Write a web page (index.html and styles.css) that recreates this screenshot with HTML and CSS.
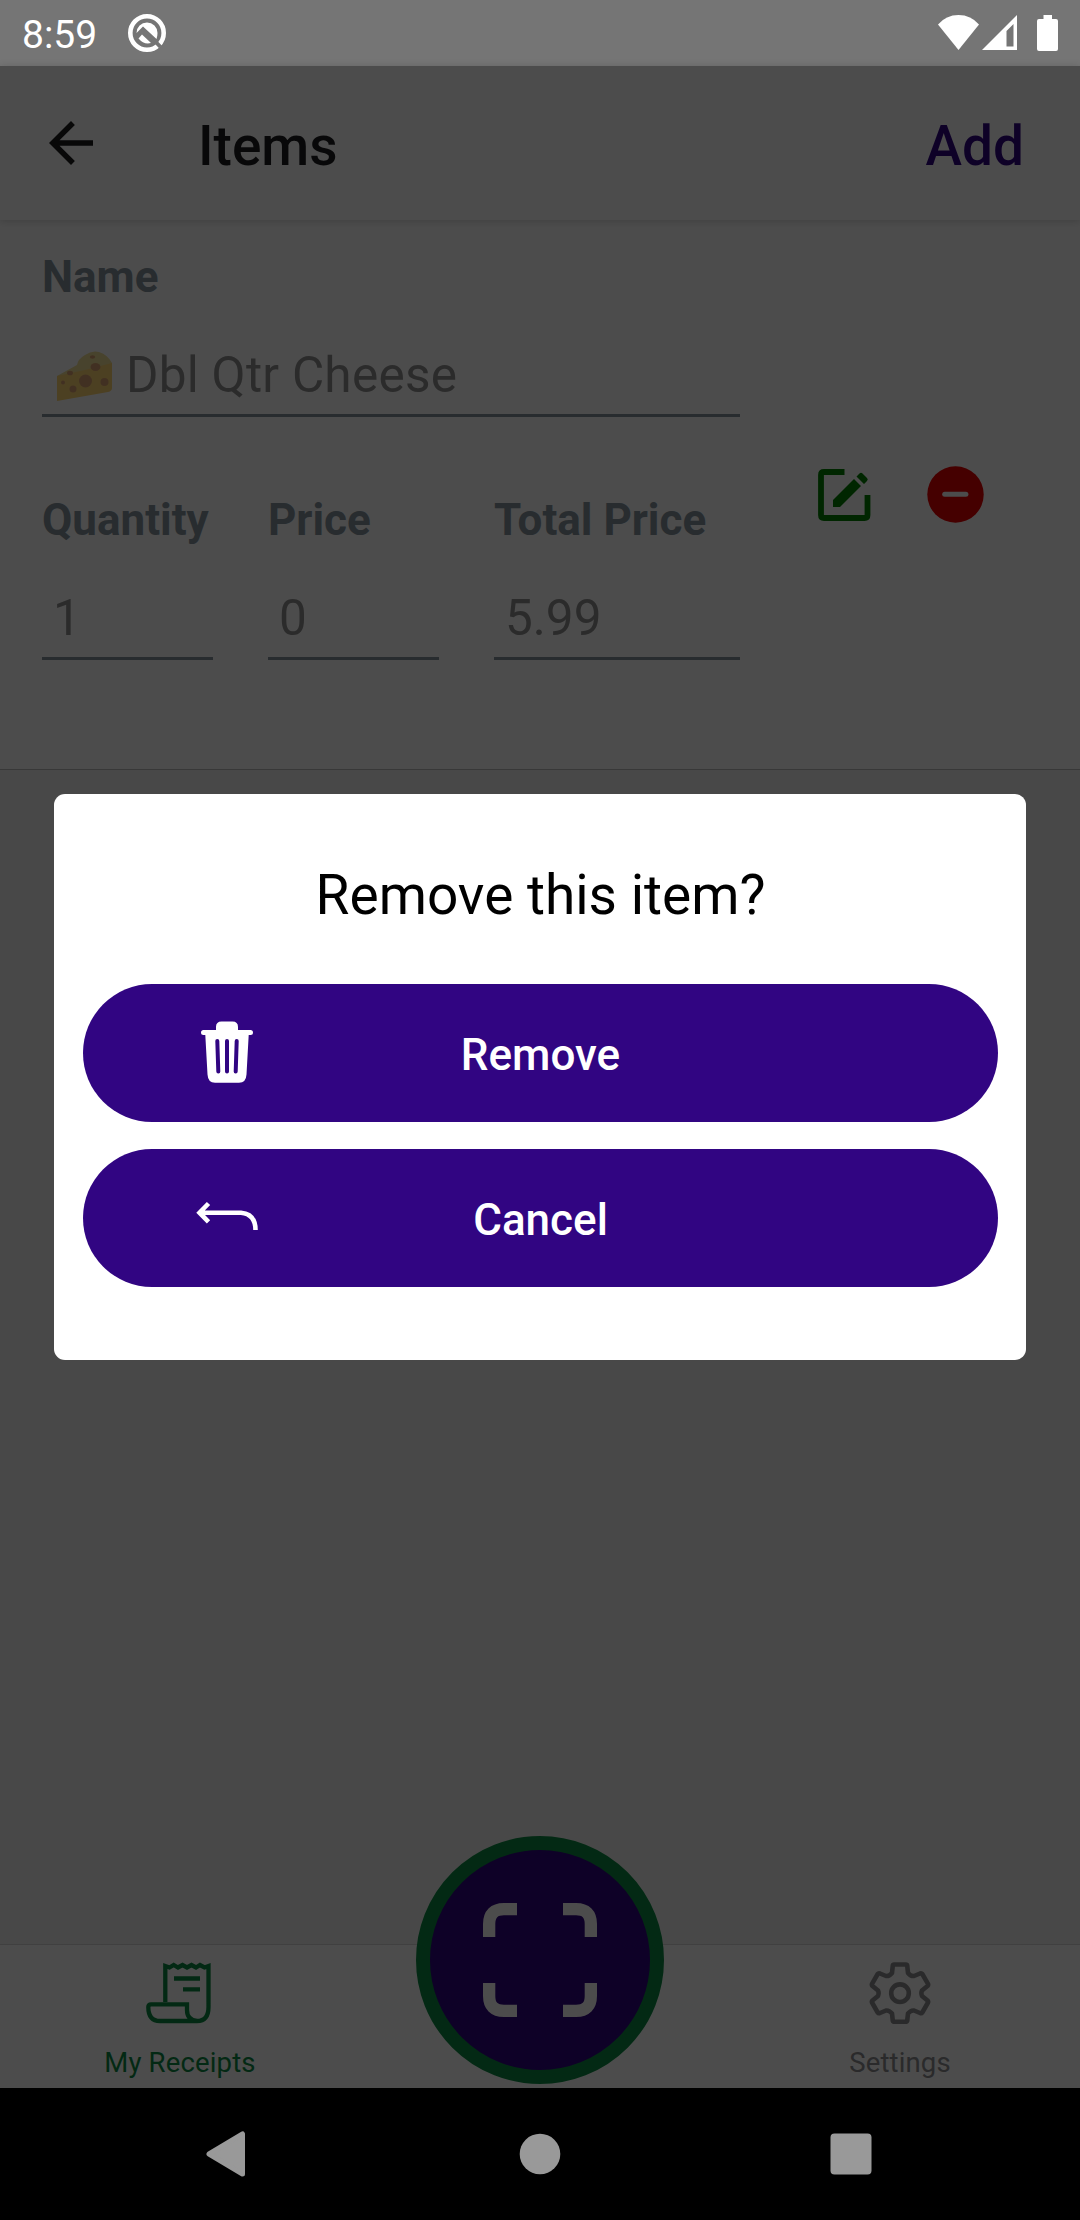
FILE: index.html
```html
<!DOCTYPE html>
<html lang="en">
<head>
<meta charset="utf-8">
<title>Items</title>
<link rel="stylesheet" href="styles.css">
</head>
<body>
<div class="phone">
  <div class="status-bar">
    <span class="clock">8:59</span>
    <svg class="status-app" width="40" height="40" viewBox="0 0 40 40">
      <circle cx="20" cy="20" r="16.700" fill="none" stroke="#fff" stroke-width="4.600"/>
      <path d="M26 26L33.500 34" stroke="#757575" stroke-width="4"/>
      <path d="M9.500 20A10.500 10.500 0 0 1 30.500 20Q30.500 23 29.500 26L16 13.500Z" fill="#fff"/>
      <path d="M15 21.500L24 30Q17 32 11.500 25.500Z" fill="#fff"/>
    </svg>
    <div class="status-icons">
      <svg width="41" height="36" viewBox="0 0 41 36"><path d="M20.500 35L0 9.500Q8 0 20.500 0T41 9.500Z" fill="#fff"/></svg>
      <svg class="signal" width="35" height="36" viewBox="0 0 35 36"><path fill-rule="evenodd" d="M35 0V35H0ZM31.500 9L24.500 16V31.500H31.500Z" fill="#fff"/></svg>
      <svg width="21" height="36" viewBox="0 0 21 36"><path d="M6.500 0H15V4H19Q21 4 21 6V34Q21 36 19 36H2Q0 36 0 34V6Q0 4 2 4H6.500Z" fill="#fff"/></svg>
    </div>
  </div>

  <div class="screen">
    <header class="header">
      <svg class="back" width="66" height="66" viewBox="0 0 24 24"><path d="M20 11H7.830l5.590-5.590L12 4l-8 8 8 8 1.410-1.410L7.830 13H20v-2z" fill="#1b1b1c"/></svg>
      <h1 class="title">Items</h1>
      <span class="add">Add</span>
    </header>

    <section class="item">
      <div class="fields">
        <div class="field">
          <label class="label">Name</label>
          <div class="value">
            <svg class="cheese" width="56" height="50" viewBox="0 0 56 50">
              <path d="M0 25L20 14Q21 8 28 4Q35-1 42 1Q51 4 55 12L55 16L0 27Z" fill="#f2e096"/>
              <path d="M0 25L28 19L55 12V37Q55 40 51 41L0 50Z" fill="#ffd673"/>
              <g fill="#dba272"><ellipse cx="28.500" cy="30" rx="6.500" ry="6.500"/><ellipse cx="38.500" cy="16" rx="5" ry="4"/><ellipse cx="35.500" cy="6" rx="2.700" ry="1.700"/><ellipse cx="13" cy="22" rx="3" ry="2.300"/><circle cx="16" cy="38" r="3.500"/><circle cx="47.500" cy="31" r="4"/><circle cx="6" cy="31.500" r="2"/></g>
            </svg>
            <span class="item-name">Dbl Qtr Cheese</span>
          </div>
        </div>
        <div class="row">
          <div class="field"><label class="label">Quantity</label><div class="value">1</div></div>
          <div class="field"><label class="label">Price</label><div class="value">0</div></div>
          <div class="field"><label class="label">Total Price</label><div class="value">5.99</div></div>
        </div>
      </div>
      <div class="actions">
        <svg width="53" height="53" viewBox="0 0 53 53">
          <path d="M26.500 3H6Q3 3 3 6V46Q3 49 6 49H46.500Q49.500 49 49.500 46V26" fill="none" stroke="#008000" stroke-width="5.800"/>
          <path d="M15 31V38H22L43 17L36 10ZM38.500 7.500L41.500 4.500Q43 3 44.500 4.500L49 9Q50.500 10.500 49 12L46 15Z" fill="#008000"/>
        </svg>
        <svg width="57" height="57" viewBox="0 0 57 57">
          <circle cx="28.500" cy="28.500" r="28.200" fill="#e60000"/>
          <rect x="15.200" y="25.800" width="26.200" height="5" rx="2.500" fill="#fff"/>
        </svg>
      </div>
    </section>

    <div class="empty"></div>

    <nav class="tabs">
      <div class="tab tab-active">
        <svg class="receipt" width="66" height="62" viewBox="0 0 66 62" fill="none" stroke="currentColor" stroke-width="4.300">
          <path d="M19.300 40V4L23.500 5.500L27.700 3L32 5.500L36.500 3L41 5.500L45.500 3L50 5.500L54 3L58.500 5.500L62.500 4V45Q62.500 59 51 59Q41 58 41 48V42.300H5Q2.300 42.300 2.300 45Q2.300 59 14 59H51"/>
          <path d="M28 16.500H54M37 27.300H54"/>
        </svg>
        <span>My Receipts</span>
      </div>
      <div class="tab-center">
        <div class="scan">
          <svg width="114" height="114" viewBox="0 0 114 114" fill="none" stroke="#fff" stroke-width="12.300">
            <path d="M6.150 34V21Q6.150 6.150 21 6.150H34M80 6.150H93Q107.850 6.150 107.850 21V34M107.850 80V93Q107.850 107.850 93 107.850H80M34 107.850H21Q6.150 107.850 6.150 93V80"/>
          </svg>
        </div>
      </div>
      <div class="tab">
        <svg width="62" height="62" viewBox="0 0 62 62" fill="none" stroke="currentColor" stroke-width="4.600" stroke-linejoin="round">
          <path d="M25 2.500H37Q38 2.500 38.200 3.500L39 11Q42 14.500 45 14L51 11.500Q52.500 11 53.300 12L59 21.800Q59.500 23 58.500 24L53 28.500Q51.800 31 53 34L58.500 38.500Q59.500 39.500 59 40.500L53.300 50.500Q52.500 51.700 51 51L45 48.500Q42 48 39 51.500L38.200 58.800Q38 59.800 37 59.800H25Q24 59.800 23.800 58.800L23 51.500Q20 48 17 48.500L11 51Q9.500 51.700 8.700 50.500L3 40.500Q2.500 39.500 3.500 38.500L9 34Q10.200 31 9 28.500L3.500 24Q2.500 23 3 21.800L8.700 12Q9.500 11 11 11.500L17 14Q20 14.500 23 11L23.800 3.500Q24 2.500 25 2.500Z"/>
          <circle cx="31" cy="31.200" r="8.800"/>
        </svg>
        <span>Settings</span>
      </div>
    </nav>

    <div class="overlay">
      <div class="modal">
        <h2 class="question">Remove this item?</h2>
        <button class="button">
          <svg class="button-icon" width="64" height="64" viewBox="0 0 64 64">
            <path fill="#fff" d="M21 10V7Q21 1.500 26.500 1.500H37.500Q43 1.500 43 7V10H55.500Q58 10 58 12.500T55.500 15H53.700L51.500 54.500Q51 62.800 44 62.800H20Q13 62.800 12.500 54.500L10.300 15H8.500Q6 15 6 12.500T8.500 10Z"/>
            <path d="M22.300 21L23.300 51.500M32 21V51.500M41.700 21L40.700 51.500" stroke="#310582" stroke-width="4" stroke-linecap="round"/>
          </svg>
          Remove
        </button>
        <button class="button">
          <svg class="button-icon" width="64" height="64" viewBox="0 0 64 64" fill="none" stroke="#fff" stroke-width="4.600">
            <path d="M13.500 18.500L4.500 27.700L13.500 36.900M4.500 27.700H46Q60.500 29 60.500 45"/>
          </svg>
          Cancel
        </button>
      </div>
    </div>
  </div>

  <div class="nav-bar">
    <svg width="40" height="46" viewBox="0 0 40 46"><path d="M36.500 3V43L3 23Z" fill="#999" stroke="#999" stroke-width="5" stroke-linejoin="round"/></svg>
    <svg width="42" height="42" viewBox="0 0 42 42"><circle cx="21" cy="21" r="20.300" fill="#999"/></svg>
    <svg width="42" height="42" viewBox="0 0 42 42"><rect x=".5" y=".5" width="41" height="41" rx="4" fill="#999"/></svg>
  </div>
</div>
</body>
</html>
```

FILE: styles.css
```css
* { box-sizing: border-box; }
body { margin: 0; font-family: Roboto, sans-serif; }
svg { display: block; flex: none; }

.phone { width: 1080px; height: 2220px; display: flex; flex-direction: column; overflow: hidden; }

.status-bar { height: 66px; background: #757575; color: #fff; display: flex; align-items: center; padding: 0 22px; }
.clock { font-size: 39px; line-height: 66px; padding-top: 3px; width: 105px; }
.status-icons { margin-left: auto; display: flex; align-items: center; gap: 3px; }
.signal { margin-right: 17px; }

.screen { position: relative; height: 2022px; display: flex; flex-direction: column; background: #f2f2f2; }

.header { height: 154px; flex: none; background: #fff; display: flex; align-items: center; padding: 0 56px 0 38px; box-shadow: 0 1px 8px rgba(0, 0, 0, .18); z-index: 1; }
.title, .add { font-size: 55px; font-weight: 500; line-height: 64px; margin: 6px 0 0; }
.title { margin-left: 94px; color: #1c1c1e; }
.add { margin-left: auto; color: #310582; }

.item { height: 550px; flex: none; background: #fff; border-bottom: 1px solid #bcbcbc; display: flex; padding: 27px 96px 0 42px; }
.fields { width: 698px; display: flex; flex-direction: column; gap: 73px; }
.row { display: grid; grid-template-columns: 171px 171px 246px; column-gap: 55px; }
.label { display: block; font-size: 44px; font-weight: 700; line-height: 60px; color: #86939e; white-space: nowrap; }
.value { height: 110px; padding: 23px 10px 0 11px; border-bottom: 3px solid #86939e; font-size: 49.5px; line-height: 90px; color: #929292; display: flex; align-items: flex-start; }
.cheese { margin: 21px 13px 0 4px; }
.item-name { letter-spacing: .25px; }
.actions { flex: 1; display: flex; align-items: flex-start; justify-content: space-between; padding: 219px 0 0 78px; }
.actions svg:first-child { margin-top: 3px; }

.empty { flex: 1; }

.tabs { height: 144px; flex: none; background: #fff; border-top: 1px solid #d8d8d8; display: grid; grid-template-columns: repeat(3, 360px); }
.tab { display: flex; flex-direction: column; align-items: center; padding-top: 17px; color: #8e8e8f; font-size: 27.5px; letter-spacing: .15px; }
.tab span { line-height: 32px; margin-top: 23px; }
.tab-active { color: #0d8b43; }
.receipt { margin-right: 2px; }
.tab-center { display: flex; justify-content: center; }
.scan { width: 248px; height: 248px; flex: none; margin-top: -109px; border-radius: 50%; border: 14px solid #0d8b43; background: #310582; display: flex; align-items: center; justify-content: center; }

.overlay { position: absolute; inset: 0; z-index: 2; background: rgba(0, 0, 0, .7); display: flex; flex-direction: column; align-items: center; padding-top: 728px; }
.modal { width: 972px; height: 566px; background: #fff; border-radius: 11px; padding: 69px 28px 0 29px; display: flex; flex-direction: column; gap: 27px; }
.question { margin: 0 0 30px; font-size: 55px; font-weight: 400; line-height: 64px; text-align: center; color: #000; }
.button { position: relative; height: 138px; flex: none; border: 0; border-radius: 69px; background: #310582; color: #fff; font: 500 44px/52px Roboto, sans-serif; padding: 3px 0 0; }
.button-icon { position: absolute; left: 112px; top: 36px; }

.nav-bar { height: 132px; background: #000; display: flex; align-items: center; justify-content: space-between; padding: 0 208px 0 206px; }
.nav-bar svg:nth-child(2) { margin-left: 4px; }
```
